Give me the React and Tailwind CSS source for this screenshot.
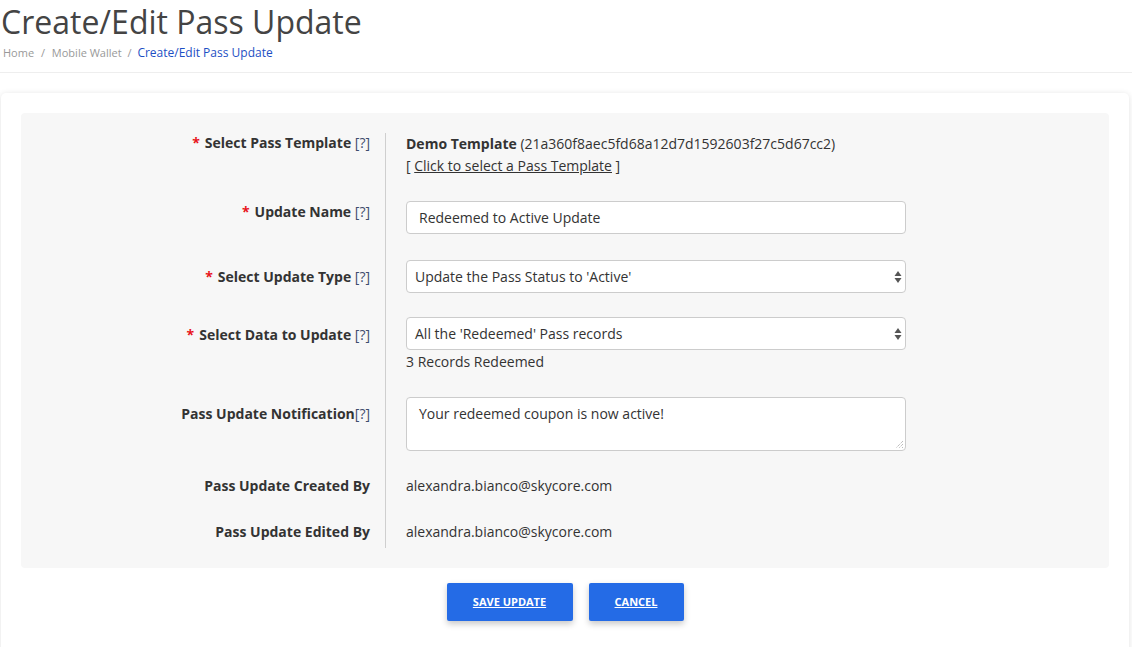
import React from "react";

const font = { fontFamily: '"Open Sans", "Noto Sans", sans-serif' };

function Help() {
    return <span className="font-normal text-[#3f4d6e]">[?]</span>;
}

function Req() {
    return <span className="text-[#e8141b] mr-[5px]">*</span>;
}

function SelectArrows() {
    return (
        <svg width="8" height="14" viewBox="0 0 8 14" className="absolute right-[3px] top-[9px]">
            <path d="M4 1 L7.5 6 L0.5 6 Z" fill="#555" />
            <path d="M4 13 L7.5 8 L0.5 8 Z" fill="#555" />
        </svg>
    );
}

function FakeSelect({ value }) {
    return (
        <div className="relative w-[500px] h-[33px] bg-white border border-[#ccc] rounded-[4px] pl-[8px] flex items-center text-[14px] text-[#333]">
            {value}
            <SelectArrows />
        </div>
    );
}

function Row({ label, labelPt, valuePt, pb = "", children }) {
    return (
        <div className="flex">
            <div
                className={`w-[364px] shrink-0 pr-[15px] text-right font-bold text-[14px] leading-[20px] text-[#333] ${labelPt} ${pb}`}
            >
                {label}
            </div>
            <div className={`flex-1 border-l border-[#cfcfcf] pl-[20px] ${valuePt} ${pb}`}>
                {children}
            </div>
        </div>
    );
}

export default function App() {
    return (
        <div className="bg-white min-h-[647px] overflow-hidden" style={font}>
            {/* header */}
            <div className="pl-[1px] pt-[1px]">
                <h1 className="text-[32px] leading-[42px] text-[#444] font-normal">
                    Create/Edit Pass Update
                </h1>
                <div className="text-[11px] leading-[18px] mt-[1px] pl-[2px] text-[#999]">
                    Home <span className="mx-[4px]">/</span> Mobile Wallet{" "}
                    <span className="mx-[3px]">/</span>{" "}
                    <span className="text-[12px] text-[#1d4fc4]">Create/Edit Pass Update</span>
                </div>
            </div>
            <div className="mt-[10px] border-t border-[#eeeeee]" />

            {/* card */}
            <div className="mt-[20px] ml-[1px] mr-[3px] bg-white rounded-[5px] shadow-[0_1px_6px_rgba(0,0,0,0.12)] p-[20px] pb-[40px]">
                <div className="bg-[#f7f7f7] rounded-[4px] pt-[20px] pb-[20px]">
                    <Row
                        label={<><Req />Select Pass Template <Help /></>}
                        labelPt="pt-0"
                        valuePt="pt-0"
                    >
                        <div className="text-[14px] leading-[22px] text-[#333]">
                            <span className="font-bold">Demo Template</span>{" "}
                            (21a360f8aec5fd68a12d7d1592603f27c5d67cc2)
                        </div>
                        <div className="text-[14px] leading-[22px] text-[#333]">
                            [ <span className="underline">Click to select a Pass Template</span> ]
                        </div>
                    </Row>
                    <Row
                        label={<><Req />Update Name <Help /></>}
                        labelPt="pt-[25px]"
                        valuePt="pt-[24px]"
                    >
                        <div className="w-[500px] h-[33px] bg-white border border-[#ccc] rounded-[4px] pl-[12px] flex items-center text-[14px] text-[#333]">
                            Redeemed to Active Update
                        </div>
                    </Row>
                    <Row
                        label={<><Req />Select Update Type <Help /></>}
                        labelPt="pt-[33px]"
                        valuePt="pt-[26px]"
                    >
                        <FakeSelect value="Update the Pass Status to 'Active'" />
                    </Row>
                    <Row
                        label={<><Req />Select Data to Update <Help /></>}
                        labelPt="pt-[32px]"
                        valuePt="pt-[24px]"
                    >
                        <FakeSelect value="All the 'Redeemed' Pass records" />
                        <div className="mt-[2px] text-[14px] leading-[20px] text-[#333]">
                            3 Records Redeemed
                        </div>
                    </Row>
                    <Row
                        label={<>Pass Update Notification<Help /></>}
                        labelPt="pt-[32px]"
                        valuePt="pt-[25px]"
                    >
                        <div className="relative w-[500px] h-[54px] bg-white border border-[#ccc] rounded-[4px] pl-[12px] pt-[6px] text-[14px] leading-[20px] text-[#333]">
                            Your redeemed coupon is now active!
                            <svg width="10" height="10" viewBox="0 0 10 10" className="absolute right-[1px] bottom-[1px]">
                                <path d="M9 2 L2 9 M9 5 L5 9 M9 8 L8 9" stroke="#888" strokeWidth="0.8" strokeDasharray="1 1" />
                            </svg>
                        </div>
                    </Row>
                    <Row label="Pass Update Created By" labelPt="pt-[25px]" valuePt="pt-[25px]">
                        <div className="text-[14px] leading-[20px] text-[#333]">
                            alexandra.bianco@skycore.com
                        </div>
                    </Row>
                    <Row
                        label="Pass Update Edited By"
                        labelPt="pt-[26px]"
                        valuePt="pt-[26px]"
                        pb="pb-[6px]"
                    >
                        <div className="text-[14px] leading-[20px] text-[#333]">
                            alexandra.bianco@skycore.com
                        </div>
                    </Row>
                </div>

                <div className="mt-[15px] flex justify-center gap-[16px]">
                    <button className="w-[126px] h-[38px] bg-[#246be6] rounded-[2px] text-white text-[11px] font-bold underline shadow-[0_3px_6px_rgba(0,0,0,0.22)]">
                        SAVE UPDATE
                    </button>
                    <button className="w-[95px] h-[38px] bg-[#246be6] rounded-[2px] text-white text-[11px] font-bold underline shadow-[0_3px_6px_rgba(0,0,0,0.22)]">
                        CANCEL
                    </button>
                </div>
            </div>
        </div>
    );
}
